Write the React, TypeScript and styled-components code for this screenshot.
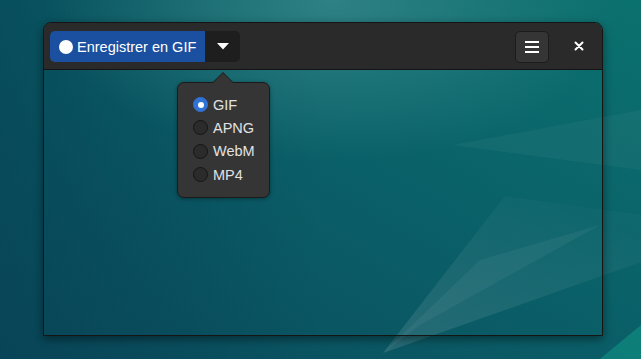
import React, { useState } from 'react';
import styled, { createGlobalStyle } from 'styled-components';

const GlobalStyle = createGlobalStyle`
    html, body {
        margin: 0;
        padding: 0;
        width: 641px;
        height: 359px;
        overflow: hidden;
    }
    body {
        font-family: 'Liberation Sans', 'Noto Sans', sans-serif;
    }
`;

const FORMATS = ['GIF', 'APNG', 'WebM', 'MP4'];

const Wallpaper = () => (
    <WallpaperSvg viewBox="0 0 641 359" preserveAspectRatio="none">
        <defs>
            <linearGradient id="base" x1="0" y1="1" x2="1" y2="0">
                <stop offset="0" stopColor="#0a4a5c" />
                <stop offset="0.55" stopColor="#0a6068" />
                <stop offset="1" stopColor="#0b716f" />
            </linearGradient>
            <radialGradient id="glow" cx="0.52" cy="0" r="0.45">
                <stop offset="0" stopColor="#3a8a8c" stopOpacity="0.75" />
                <stop offset="1" stopColor="#3a8a8c" stopOpacity="0" />
            </radialGradient>
            <linearGradient id="leftShade" x1="0" y1="0" x2="1" y2="0">
                <stop offset="0" stopColor="#063f52" stopOpacity="0.5" />
                <stop offset="0.5" stopColor="#063f52" stopOpacity="0" />
            </linearGradient>
            <linearGradient id="wedge" x1="0" y1="1" x2="0.6" y2="0">
                <stop offset="0" stopColor="#ffffff" stopOpacity="0.12" />
                <stop offset="1" stopColor="#ffffff" stopOpacity="0.02" />
            </linearGradient>
        </defs>
        <rect width="641" height="359" fill="url(#base)" />
        <rect width="641" height="359" fill="url(#leftShade)" />
        <rect width="641" height="359" fill="url(#glow)" />
        <polygon points="383,353 505,196 641,215 641,262" fill="url(#wedge)" />
        <polygon points="383,353 480,260 600,225 420,325" fill="#ffffff" opacity="0.05" />
        <polygon points="452,145 641,110 641,170" fill="#ffffff" opacity="0.04" />
        <polygon points="600,359 641,325 641,359" fill="#0f8c82" opacity="0.7" />
    </WallpaperSvg>
);

const RecordDot = () => <Dot />;

const Caret = () => (
    <svg width="12" height="7" viewBox="0 0 12 7">
        <polygon points="0,0 12,0 6,6.5" fill="#ffffff" />
    </svg>
);

const Hamburger = () => (
    <svg width="14" height="12" viewBox="0 0 14 12">
        <rect x="0" y="0" width="14" height="2" fill="#ffffff" />
        <rect x="0" y="5" width="14" height="2" fill="#ffffff" />
        <rect x="0" y="10" width="14" height="2" fill="#ffffff" />
    </svg>
);

const CloseIcon = () => (
    <svg width="10" height="10" viewBox="0 0 10 10">
        <path d="M1.5 1.5 L8.5 8.5 M8.5 1.5 L1.5 8.5" stroke="#ffffff" strokeWidth="2" strokeLinecap="round" />
    </svg>
);

export default function App() {
    const [format, setFormat] = useState<string>('GIF');
    return (
        <Desktop>
            <GlobalStyle />
            <Wallpaper />
            <Window>
                <HeaderBar>
                    <SplitButton>
                        <RecordButton>
                            <RecordDot />
                            <span>Enregistrer en {format}</span>
                        </RecordButton>
                        <MenuToggle>
                            <Caret />
                            <Popover>
                                {FORMATS.map((f) => (
                                    <RadioRow key={f} onClick={() => setFormat(f)}>
                                        <Radio checked={f === format} />
                                        <RadioLabel>{f}</RadioLabel>
                                    </RadioRow>
                                ))}
                            </Popover>
                        </MenuToggle>
                    </SplitButton>
                    <Spacer />
                    <IconButton>
                        <Hamburger />
                    </IconButton>
                    <CloseButton>
                        <CloseIcon />
                    </CloseButton>
                </HeaderBar>
                <Body />
            </Window>
        </Desktop>
    );
}

const Desktop = styled.div`
    position: relative;
    width: 641px;
    height: 359px;
    overflow: hidden;
    padding: 22px 0 0 43px;
    box-sizing: border-box;
`;
const WallpaperSvg = styled.svg`
    position: absolute;
    left: 0;
    top: 0;
    width: 641px;
    height: 359px;
    z-index: 0;
`;
const Window = styled.div`
    position: relative;
    z-index: 1;
    width: 560px;
    height: 314px;
    box-sizing: border-box;
    display: flex;
    flex-direction: column;
    border: 1px solid #151515;
    border-radius: 8px 8px 0 0;
    box-shadow: 0 3px 10px rgba(0, 0, 0, 0.45);
`;
const HeaderBar = styled.div`
    height: 46px;
    display: flex;
    align-items: center;
    padding: 0 6px 0 6px;
    background: #2a2a2a;
    border-bottom: 1px solid #141414;
    border-radius: 7px 7px 0 0;
    flex-shrink: 0;
`;
const SplitButton = styled.div`
    display: flex;
    height: 31px;
    margin-top: 1px;
`;
const RecordButton = styled.button`
    display: flex;
    align-items: center;
    gap: 4px;
    width: 155px;
    height: 31px;
    padding: 0 0 0 9px;
    border: none;
    border-radius: 5px 0 0 5px;
    background: #1b4f9f;
    color: #ffffff;
    font-family: 'Liberation Sans', 'Noto Sans', sans-serif;
    font-size: 14.5px;
    cursor: pointer;
`;
const Dot = styled.span`
    width: 14px;
    height: 14px;
    border-radius: 50%;
    background: #ffffff;
    flex-shrink: 0;
`;
const MenuToggle = styled.div`
    position: relative;
    width: 35px;
    height: 31px;
    display: flex;
    align-items: center;
    justify-content: center;
    background: #1e1e1e;
    border-radius: 0 5px 5px 0;
    cursor: pointer;
`;
const Popover = styled.div`
    position: absolute;
    top: 51px;
    left: -28px;
    width: 93px;
    box-sizing: border-box;
    padding: 10px 0 11px 15px;
    display: flex;
    flex-direction: column;
    background: #353535;
    border: 1px solid #1a1a1a;
    border-radius: 7px;
    box-shadow: 0 1px 4px rgba(0, 0, 0, 0.35);
    cursor: default;
    &::before {
        content: '';
        position: absolute;
        top: -11px;
        left: 34px;
        border-left: 11px solid transparent;
        border-right: 11px solid transparent;
        border-bottom: 11px solid #1a1a1a;
    }
    &::after {
        content: '';
        position: absolute;
        top: -10px;
        left: 35px;
        border-left: 10px solid transparent;
        border-right: 10px solid transparent;
        border-bottom: 10px solid #353535;
    }
`;
const RadioRow = styled.div`
    display: flex;
    align-items: center;
    gap: 5px;
    height: 23.3px;
    cursor: pointer;
`;
const Radio = styled.span<{ checked: boolean }>`
    width: 15px;
    height: 15px;
    box-sizing: border-box;
    border-radius: 50%;
    flex-shrink: 0;
    position: relative;
    background: ${({ checked }) => (checked ? '#2f73d6' : '#2b2b2b')};
    border: 1px solid ${({ checked }) => (checked ? '#2f73d6' : '#151515')};
    &::after {
        content: '';
        display: ${({ checked }) => (checked ? 'block' : 'none')};
        position: absolute;
        left: 3.5px;
        top: 3.5px;
        width: 6px;
        height: 6px;
        border-radius: 50%;
        background: #ffffff;
    }
`;
const RadioLabel = styled.span`
    font-family: 'Liberation Sans', 'Noto Sans', sans-serif;
    font-size: 14.5px;
    color: #e2e2e2;
`;
const Spacer = styled.div`
    flex: 1;
`;
const IconButton = styled.button`
    width: 34px;
    height: 32px;
    display: flex;
    align-items: center;
    justify-content: center;
    padding: 0;
    margin-top: 1px;
    background: #353535;
    border: 1px solid #1c1c1c;
    border-radius: 5px;
    cursor: pointer;
`;
const CloseButton = styled.button`
    width: 34px;
    height: 32px;
    margin-left: 13px;
    display: flex;
    align-items: center;
    justify-content: center;
    padding: 0;
    background: transparent;
    border: none;
    cursor: pointer;
`;
const Body = styled.div`
    flex: 1;
`;
